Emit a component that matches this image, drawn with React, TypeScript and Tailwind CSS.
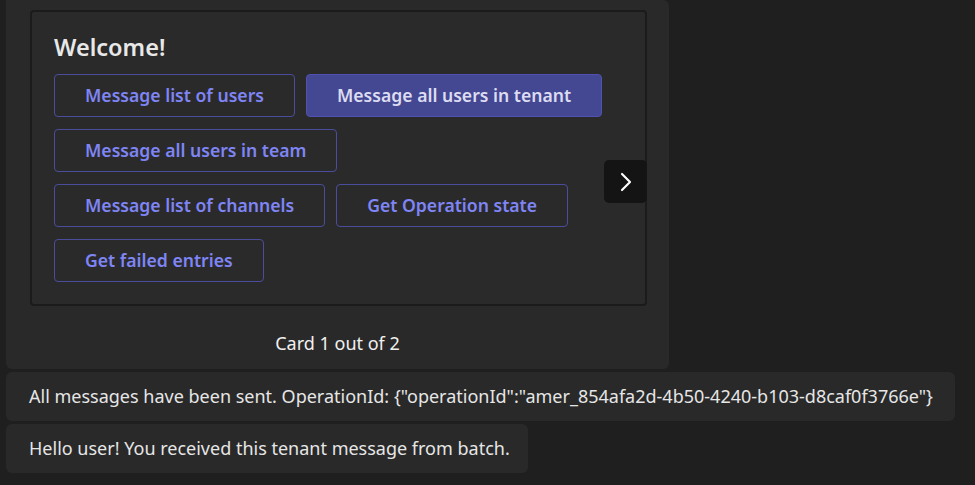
import { ChevronRight } from 'lucide-react';

const rows = [
  [
    { label: 'Message list of users' },
    { label: 'Message all users in tenant', active: true },
  ],
  [{ label: 'Message all users in team' }],
  [{ label: 'Message list of channels' }, { label: 'Get Operation state' }],
  [{ label: 'Get failed entries' }],
];

export default function App() {
  return (
    <div
      className="h-[485px] w-[975px] overflow-hidden bg-[#1f1f1f] pl-[6px] text-[#e6e6e6]"
      style={{ fontFamily: '"Noto Sans", "Open Sans", sans-serif' }}
    >
      <div className="flex flex-col gap-[3px]">
        <div className="relative h-[369px] w-[663px] rounded-b-md rounded-tr-md bg-[#292929] pl-[24px] pt-[10px]">
          <div className="h-[296px] w-[617px] rounded-[4px] border-2 border-[#1b1b1b] bg-[#2a2a2a] pl-[22px] pt-[19px]">
            <h2 className="text-[23.5px] font-semibold leading-[33px] text-[#e8e8e8]">Welcome!</h2>
            <div className="mt-[10px] flex flex-col gap-[12px]">
              {rows.map((row, i) => (
                <div key={i} className="flex gap-[11px]">
                  {row.map(b => (
                    <button
                      key={b.label}
                      className={`h-[43px] rounded-[4px] border px-[30px] text-[17.6px] font-semibold ${
                        b.active
                          ? 'border-[#4f52b2] bg-[#444791] text-[#dcdcf2]'
                          : 'border-[#4a4d9c] bg-transparent text-[#7f85f5]'
                      }`}
                    >
                      {b.label}
                    </button>
                  ))}
                </div>
              ))}
            </div>
          </div>
          <div className="absolute left-[598px] top-[160px] flex h-[43px] w-[43px] items-center justify-center rounded-[5px] bg-[#141414]">
            <ChevronRight size={32} strokeWidth={1.6} className="text-white" />
          </div>
          <p className="mt-[24px] pr-[24px] text-center text-[18px] leading-[26px] text-[#f0f0f0]">Card 1 out of 2</p>
        </div>
        <div className="flex h-[49px] w-[949px] items-center rounded-md bg-[#292929] pl-[23px] text-[18px]">
          All messages have been sent. OperationId: {'{"operationId":"amer_854afa2d-4b50-4240-b103-d8caf0f3766e"}'}
        </div>
        <div className="flex h-[49px] w-[522px] items-center rounded-md bg-[#292929] pl-[23px] text-[18px]">
          Hello user! You received this tenant message from batch.
        </div>
      </div>
    </div>
  );
}
